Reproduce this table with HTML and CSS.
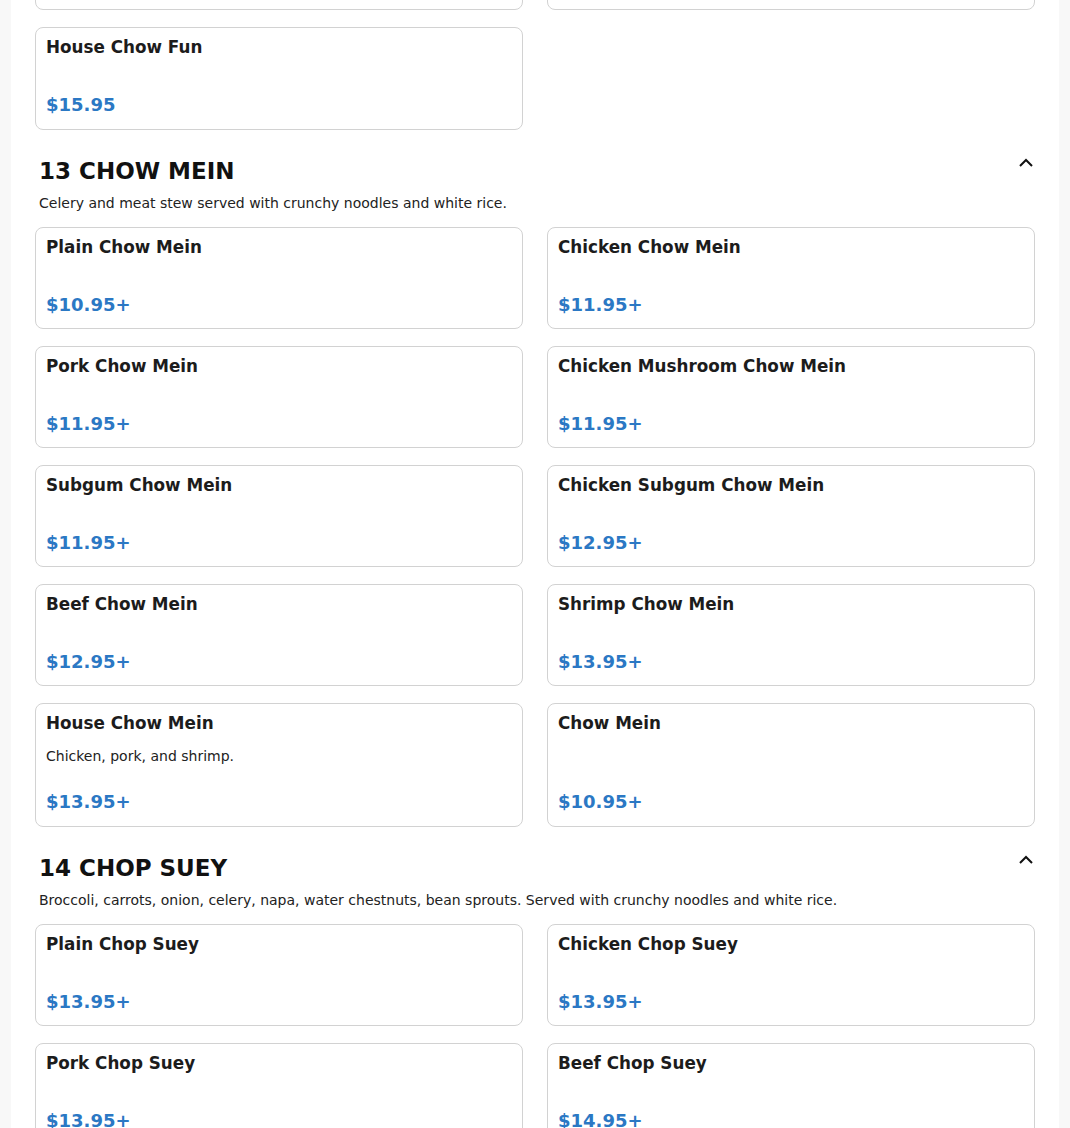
FILE: index.html
```html
<!DOCTYPE html>
<html lang="en">
<head>
    <meta charset="UTF-8">
    <title>Menu</title>
    <link rel="stylesheet" href="styles.css">
</head>
<body>

<main class="menu">

    <section class="category">
        <div class="dishes">
            <div class="dish">
                <h3 class="dish-name">Beef Chow Fun</h3>
                <p class="dish-price">$14.95</p>
            </div>
            <div class="dish">
                <h3 class="dish-name">Shrimp Chow Fun</h3>
                <p class="dish-price">$15.95</p>
            </div>
            <div class="dish">
                <h3 class="dish-name">House Chow Fun</h3>
                <p class="dish-price">$15.95</p>
            </div>
        </div>
    </section>

    <section class="category">
        <div class="category-head">
            <h2>13 CHOW MEIN</h2>
            <button class="toggle" aria-label="Collapse">
                <svg width="16" height="16" viewBox="0 0 16 16"><polyline points="2,8 8,2 14,8" fill="none" stroke="#111" stroke-width="2"/></svg>
            </button>
        </div>
        <p class="category-desc">Celery and meat stew served with crunchy noodles and white rice.</p>
        <div class="dishes">
            <div class="dish">
                <h3 class="dish-name">Plain Chow Mein</h3>
                <p class="dish-price">$10.95+</p>
            </div>
            <div class="dish">
                <h3 class="dish-name">Chicken Chow Mein</h3>
                <p class="dish-price">$11.95+</p>
            </div>
            <div class="dish">
                <h3 class="dish-name">Pork Chow Mein</h3>
                <p class="dish-price">$11.95+</p>
            </div>
            <div class="dish">
                <h3 class="dish-name">Chicken Mushroom Chow Mein</h3>
                <p class="dish-price">$11.95+</p>
            </div>
            <div class="dish">
                <h3 class="dish-name">Subgum Chow Mein</h3>
                <p class="dish-price">$11.95+</p>
            </div>
            <div class="dish">
                <h3 class="dish-name">Chicken Subgum Chow Mein</h3>
                <p class="dish-price">$12.95+</p>
            </div>
            <div class="dish">
                <h3 class="dish-name">Beef Chow Mein</h3>
                <p class="dish-price">$12.95+</p>
            </div>
            <div class="dish">
                <h3 class="dish-name">Shrimp Chow Mein</h3>
                <p class="dish-price">$13.95+</p>
            </div>
            <div class="dish">
                <h3 class="dish-name">House Chow Mein</h3>
                <p class="dish-desc">Chicken, pork, and shrimp.</p>
                <p class="dish-price">$13.95+</p>
            </div>
            <div class="dish">
                <h3 class="dish-name">Chow Mein</h3>
                <p class="dish-price">$10.95+</p>
            </div>
        </div>
    </section>

    <section class="category">
        <div class="category-head">
            <h2>14 CHOP SUEY</h2>
            <button class="toggle" aria-label="Collapse">
                <svg width="16" height="16" viewBox="0 0 16 16"><polyline points="2,8 8,2 14,8" fill="none" stroke="#111" stroke-width="2"/></svg>
            </button>
        </div>
        <p class="category-desc">Broccoli, carrots, onion, celery, napa, water chestnuts, bean sprouts. Served with crunchy noodles and white rice.</p>
        <div class="dishes">
            <div class="dish">
                <h3 class="dish-name">Plain Chop Suey</h3>
                <p class="dish-price">$13.95+</p>
            </div>
            <div class="dish">
                <h3 class="dish-name">Chicken Chop Suey</h3>
                <p class="dish-price">$13.95+</p>
            </div>
            <div class="dish">
                <h3 class="dish-name">Pork Chop Suey</h3>
                <p class="dish-price">$13.95+</p>
            </div>
            <div class="dish">
                <h3 class="dish-name">Beef Chop Suey</h3>
                <p class="dish-price">$14.95+</p>
            </div>
        </div>
    </section>

</main>

</body>
</html>
```

FILE: styles.css
```css
html, body {
    overflow: hidden;
}

body {
    margin: 0;
    background: #f8f8f8;
    font-family: "DejaVu Sans", sans-serif;
    color: #1c1c1c;
}

.menu {
    width: 1048px;
    margin: -116px auto 0;
    padding: 24px 24px 40px;
    box-sizing: border-box;
    background: #fff;
}

.category + .category {
    margin-top: 28px;
}

.category-head {
    display: flex;
    justify-content: space-between;
    align-items: flex-start;
    padding: 0 1px 0 4px;
}

.category-head h2 {
    margin: 0;
    font-size: 23px;
    line-height: 27px;
    font-weight: bold;
    color: #111;
}

.toggle {
    border: none;
    background: none;
    padding: 0;
    cursor: pointer;
    display: flex;
}

.category-desc {
    margin: 8px 0 13px;
    padding-left: 4px;
    font-size: 14px;
    line-height: 21px;
    color: #222;
}

.dishes {
    display: grid;
    grid-template-columns: 1fr 1fr;
    column-gap: 24px;
    row-gap: 16.7px;
}

.dish {
    border: 1px solid #d2d2d2;
    border-radius: 8px;
    padding: 9px 10px 11px;
    display: flex;
    flex-direction: column;
}

.dish-name {
    margin: 0 0 13px;
    font-size: 16.8px;
    line-height: 1.2;
    font-weight: bold;
    color: #1c1c1c;
}

.dish-desc {
    margin: 0;
    font-size: 14px;
    line-height: 21px;
    color: #222;
}

.dish-price {
    margin: auto 0 0;
    padding-top: 23px;
    font-size: 18px;
    line-height: 24.3px;
    font-weight: bold;
    color: #2b78c4;
}
```
